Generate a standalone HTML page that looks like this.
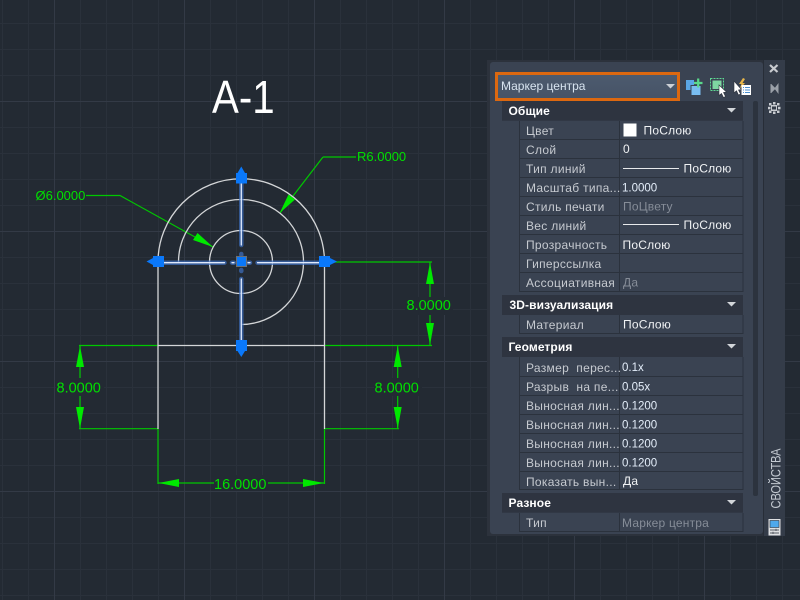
<!DOCTYPE html>
<html><head><meta charset="utf-8"><style>
html,body{margin:0;padding:0;background:#232a33;width:800px;height:600px;overflow:hidden}
svg{display:block}
text{font-family:"Liberation Sans",sans-serif}
.l{font-size:12px;fill:#c6cad0;letter-spacing:.3px}
.v{font-size:12px;fill:#f0f2f4;letter-spacing:.2px}
.d{font-size:12px;fill:#868d98;letter-spacing:.2px}
.h{font-size:12px;fill:#fff;font-weight:bold;letter-spacing:.1px}
.n{font-size:11.5px;fill:#e4eefa}
.g{font-size:14.5px;fill:#00e000;letter-spacing:0}
</style></head><body>
<svg width="800" height="600" viewBox="0 0 800 600" xmlns="http://www.w3.org/2000/svg">
<defs>
<pattern id="mi" width="26" height="26" patternUnits="userSpaceOnUse" x="2" y="23">
<path d="M.5 0V26M0 .5H26" stroke="#2a313b" stroke-width="1" fill="none"/></pattern>
<pattern id="ma" width="130" height="130" patternUnits="userSpaceOnUse" x="54" y="101">
<path d="M.5 0V130M0 .5H130" stroke="#333a46" stroke-width="1" fill="none"/></pattern>
<linearGradient id="dd" x1="0" y1="0" x2="0" y2="1"><stop offset="0" stop-color="#4d5b6f"/><stop offset="1" stop-color="#465366"/></linearGradient>
</defs>
<rect width="800" height="600" fill="#232a33"/>
<rect width="800" height="600" fill="url(#mi)"/>
<rect width="800" height="600" fill="url(#ma)"/>

<text transform="translate(212 113) scale(.875 1)" font-size="46" fill="#fff">A-1</text>

<!-- green dims -->
<g stroke="#00c800" stroke-width="1.2" fill="none">
<path d="M79 345.5H158M79 428.7H158M80 345.5V428.7"/>
<path d="M324.5 345.5H432M324.5 428.7H399M397.7 345.5V428.7"/>
<path d="M324.5 262H432M430 262V345.5"/>
<path d="M158 429V484M324.5 429V484M158 483H324.5"/>
<path d="M323 157H356M323 157L280 213"/>
<path d="M86 195.5H120L213 247"/>
</g>
<g fill="#00e800">
<path d="M80 346L76 367H84Z"/><path d="M80 428.5L76 407H84Z"/>
<path d="M397.7 346L393.7 367H401.7Z"/><path d="M397.7 428.5L393.7 407H401.7Z"/>
<path d="M430 262.5L426 284H434Z"/><path d="M430 345L426 323H434Z"/>
<path d="M158.5 483L179 479V487Z"/><path d="M324 483L303 479V487Z"/>
<path d="M279.7 213L288.5 194.5L295 199.5Z"/>
<path d="M213 247L193 240L197.5 233Z"/>
</g>
<g>
<rect x="56" y="378" width="48" height="18" fill="#232a33"/>
<rect x="374" y="378" width="48" height="18" fill="#232a33"/>
<rect x="405" y="297" width="48" height="18" fill="#232a33"/>
<rect x="214" y="475" width="54" height="16" fill="#232a33"/>
</g>
<text class="g" x="56.500" y="392.500">8.0000</text>
<text class="g" x="374.500" y="392.500">8.0000</text>
<text class="g" x="406.500" y="310">8.0000</text>
<text class="g" x="214" y="489">16.0000</text>
<text x="357" y="161" font-size="13" fill="#00e000">R6.0000</text>
<text x="35.500" y="200" font-size="13" fill="#00e000">Ø6.0000</text>

<!-- white geometry -->
<g stroke="#d4d6d8" stroke-width="1.3" fill="none">
<path d="M158 429V262A83.2 83.2 0 0 1 324.500 262V429"/>
<path d="M158 345.500H324.500"/>
<path d="M178.500 262A62.500 62.500 0 1 1 241.300 324.500"/>
<circle cx="241" cy="262" r="31.500"/>
</g>

<!-- center mark glow -->
<g fill="none" stroke-linecap="round">
<g stroke="#3d6fc0" stroke-opacity=".7" stroke-width="4.500">
<path d="M241.300 176V245M241.300 279V345M160 262.700H224.500M257.500 262.700H322"/>
<path d="M232 262.700H234M248 262.700H250M241.300 254V255M241.300 270V271"/>
</g>
<g stroke="#dfe9fb" stroke-width="1.300">
<path d="M241.300 176V245M241.300 279V345M160 262.700H224.500M257.500 262.700H322"/>
<path d="M232 262.700H234M248 262.700H250"/>
</g>
</g>

<!-- grips -->
<g fill="#0a78fa">
<rect x="236" y="173" width="11" height="10.500"/><path d="M241.300 166.500L245 173H237.500Z"/>
<rect x="236" y="340" width="11" height="11"/><path d="M241.300 357L245 351H237.500Z"/>
<rect x="153" y="256" width="11" height="11"/><path d="M146.500 261.500L153 258V265Z"/>
<rect x="319" y="256" width="11" height="11"/><path d="M337 261.500L330 258V265Z"/>
<rect x="236.500" y="256.500" width="10" height="10" stroke="#6b7076" stroke-width="1"/>
</g>

<!-- panel -->
<rect x="487" y="60" width="298" height="476" fill="#2c323c"/>
<rect x="490" y="62" width="273" height="472" rx="3" fill="#3a4352"/>
<rect x="764" y="60" width="21" height="476" fill="#343c49"/>
<path d="M763.500 60V536" stroke="#272d37"/>

<!-- dropdown -->
<rect x="496.500" y="73.500" width="182" height="26" fill="url(#dd)" stroke="#dc6810" stroke-width="3"/>
<text x="501" y="90" font-size="12" fill="#d8e4f0">Маркер центра</text>
<path d="M666 84H675L670.500 88.500Z" fill="#ccd0d6"/>

<!-- toolbar icons -->
<g>
<rect x="686" y="80" width="8" height="10" fill="#5aa7e6"/>
<rect x="691" y="85.500" width="10" height="10" fill="#79bdf0" stroke="#3a4352" stroke-width="1"/>
<path d="M694 83H702.500M698.200 78.500V87.500" stroke="#59d98b" stroke-width="2.200" fill="none"/>
<rect x="710.500" y="78.500" width="13" height="12" fill="none" stroke="#5ed893" stroke-width="1" stroke-dasharray="2 1"/>
<rect x="712.500" y="80.500" width="9" height="8.500" fill="#7ed6a1"/>
<path d="M719 85V95.500L721.500 93.500L723.500 97.500L725.500 96.500L723.500 92.500L726.500 92Z" fill="#fff" stroke="#2c323c" stroke-width=".6"/>
<path d="M743 78L739 84H741.500L739.500 89L745 83H742.500L745 79Z" fill="#e7b64a"/>
<path d="M734 81V93L736.500 90.800L738.500 95L740.500 94L738.500 90L741.500 89.500Z" fill="#fff" stroke="#2c323c" stroke-width=".6"/>
<rect x="741.500" y="85" width="9.500" height="10" fill="#fff"/>
<path d="M743 87.500H744M745 87.500H750M743 90H744M745 90H750M743 92.500H744M745 92.500H750" stroke="#4a8fd0" stroke-width="1"/>
</g>

<!-- right strip icons -->
<path d="M770 65L777.500 72M777.500 65L770 72" stroke="#c8cbd0" stroke-width="2.200" fill="none"/>
<path d="M771 84V93M772 85.500L775 88.500L772 91.500ZM778 84.500V92.500L775 88.500Z" fill="#9aa0a8" stroke="#9aa0a8" stroke-width="1"/>
<g fill="#c8cbd0">
<rect x="771" y="105" width="6" height="6"/>
<rect x="769" y="103" width="2.500" height="2.500"/><rect x="777" y="103" width="2.500" height="2.500"/>
<rect x="769" y="110.500" width="2.500" height="2.500"/><rect x="777" y="110.500" width="2.500" height="2.500"/>
<rect x="773" y="102" width="2.500" height="2.500"/><rect x="773" y="111.500" width="2.500" height="2.500"/>
<rect x="768" y="106.800" width="2.500" height="2.500"/><rect x="778" y="106.800" width="2.500" height="2.500"/>
</g>
<rect x="772" y="106.500" width="4" height="3" fill="#343c49"/>
<text transform="translate(780.500 508.500) rotate(-90)" font-size="13.500" fill="#c3c9d1" textLength="60" lengthAdjust="spacingAndGlyphs">СВОЙСТВА</text>
<rect x="768.500" y="519" width="12" height="16.500" fill="#dfe1e3"/>
<rect x="770" y="520.500" width="9" height="7" fill="#4fa9ec" stroke="#2c323c" stroke-width=".6"/>
<path d="M770 530H779M770 533H779M776 528.800V531M773 531.800V534" stroke="#555b63" stroke-width="1" fill="none"/>

<!-- scrollbar -->
<rect x="753" y="101" width="5" height="395" rx="2" fill="#2c333e"/>

<!-- grid rows -->
<g fill="#2e3440">
<rect x="502" y="101" width="241" height="19.700"/>
<rect x="502" y="295" width="241" height="20"/>
<rect x="502" y="337" width="241" height="20"/>
<rect x="502" y="493" width="241" height="19.700"/>
</g>
<g stroke="#2b323d" stroke-width="1" fill="none">
<path d="M519.500 121V292M619.500 121V292M743 121V292"/>
<path d="M519.500 139.500H743M519.500 158.500H743M519.500 177.500H743M519.500 196.500H743M519.500 215.500H743M519.500 234.500H743M519.500 253.500H743M519.500 272.500H743M519.500 291.500H743"/>
<path d="M519.500 315V334M619.500 315V334M743 315V334M519.500 333.500H743"/>
<path d="M519.500 357V490M619.500 357V490M743 357V490"/>
<path d="M519.500 376.500H743M519.500 395.500H743M519.500 414.500H743M519.500 433.500H743M519.500 452.500H743M519.500 471.500H743M519.500 489.500H743"/>
<path d="M519.500 513V532M619.500 513V532M743 513V532M519.500 531.500H743"/>
</g>

<g fill="#d2d5d9">
<path d="M727 108H736L731.500 112.500Z"/>
<path d="M727 302H736L731.500 306.500Z"/>
<path d="M727 344H736L731.500 348.500Z"/>
<path d="M727 500H736L731.500 504.500Z"/>
</g>

<text class="h" x="508.500" y="115">Общие</text>
<text class="h" x="509.500" y="309">3D-визуализация</text>
<text class="h" x="508.500" y="351">Геометрия</text>
<text class="h" x="508.500" y="507">Разное</text>

<text class="l" x="526" y="135">Цвет</text>
<text class="l" x="526" y="154">Слой</text>
<text class="l" x="526" y="173">Тип линий</text>
<text class="l" x="526" y="192">Масштаб типа...</text>
<text class="l" x="526" y="211">Стиль печати</text>
<text class="l" x="526" y="230">Вес линий</text>
<text class="l" x="526" y="249">Прозрачность</text>
<text class="l" x="526" y="268">Гиперссылка</text>
<text class="l" x="526" y="287">Ассоциативная</text>
<text class="l" x="526" y="329">Материал</text>
<text class="l" x="526" y="372" xml:space="preserve">Размер  перес...</text>
<text class="l" x="526" y="391" xml:space="preserve">Разрыв  на пе...</text>
<text class="l" x="526" y="410">Выносная лин...</text>
<text class="l" x="526" y="429">Выносная лин...</text>
<text class="l" x="526" y="448">Выносная лин...</text>
<text class="l" x="526" y="467">Выносная лин...</text>
<text class="l" x="526" y="486">Показать вын...</text>
<text class="l" x="526" y="527">Тип</text>

<rect x="623.500" y="123.500" width="13" height="13" fill="#fff"/>
<text class="v" x="643.500" y="134.500">ПоСлою</text>
<text class="v" x="623" y="153">0</text>
<path d="M623 168.500H679M623 224.500H679" stroke="#e8eaec" stroke-width="1"/>
<text class="v" x="683.500" y="172.500">ПоСлою</text>
<text class="n" x="622" y="191.500">1.0000</text>
<text class="d" x="623" y="210.500">ПоЦвету</text>
<text class="v" x="683.500" y="229">ПоСлою</text>
<text class="v" x="622.500" y="249">ПоСлою</text>
<text class="d" x="623" y="286.500">Да</text>
<text class="v" x="623" y="328.500">ПоСлою</text>
<text class="n" x="622" y="371">0.1x</text>
<text class="n" x="622" y="390.500">0.05x</text>
<text class="n" x="622" y="409.500">0.1200</text>
<text class="n" x="622" y="428.500">0.1200</text>
<text class="n" x="622" y="447.500">0.1200</text>
<text class="n" x="622" y="466.500">0.1200</text>
<text class="v" x="623" y="485">Да</text>
<text class="d" x="622" y="527">Маркер центра</text>
</svg>
</body></html>
